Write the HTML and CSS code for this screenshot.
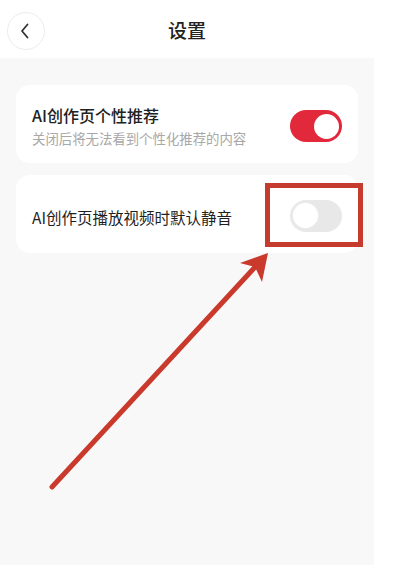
FILE: index.html
```html
<!DOCTYPE html>
<html lang="zh-CN">
<head>
<meta charset="utf-8">
<link rel="stylesheet" href="styles.css">
</head>
<body>
<div class="page">
  <div class="screen">
    <header class="header">
      <div class="back">
        <svg width="10" height="16" viewBox="0 0 10 16"><path d="M7.5 1.5 L2 8 L7.5 14.5" fill="none" stroke="#333" stroke-width="1.8" stroke-linecap="round" stroke-linejoin="round"/></svg>
      </div>
      <div class="title">设置</div>
    </header>
    <main class="main">
      <div class="card card-two-line">
        <div class="texts">
          <div class="label">AI创作页个性推荐</div>
          <div class="desc">关闭后将无法看到个性化推荐的内容</div>
        </div>
        <div class="switch on"><span class="knob"></span></div>
      </div>
      <div class="card card-one-line">
        <div class="texts">
          <div class="label">AI创作页播放视频时默认静音</div>
        </div>
        <div class="switch off"><span class="knob"></span></div>
      </div>
    </main>
  </div>
  <div class="highlight"></div>
  <svg class="arrow" width="394" height="565" viewBox="0 0 394 565">
    <line x1="52" y1="487" x2="256" y2="266" stroke="#c93a2c" stroke-width="5" stroke-linecap="round"/>
    <polygon points="268,253 240,263 255,267 262,282" fill="#c93a2c"/>
  </svg>
</div>
</body>
</html>
```
FILE: styles.css
```css
* { box-sizing: border-box; }
html, body { margin: 0; padding: 0; background: #ffffff; }
body { font-family: "Noto Sans CJK SC", "Noto Sans", sans-serif; }
.page { position: relative; width: 394px; height: 565px; overflow: hidden; background: #fff; }
.screen { width: 374px; height: 565px; display: flex; flex-direction: column; }
.header { height: 58px; position: relative; display: flex; align-items: center; justify-content: center; background: #fff; flex-shrink: 0; }
.back { position: absolute; left: 7px; top: 12px; width: 38px; height: 38px; border-radius: 50%; border: 1px solid #ececec; display: flex; align-items: center; justify-content: center; padding-right: 2px; }
.title { font-size: 19px; font-weight: 500; color: #222; line-height: 26px; margin-top: 2px; }
.main { flex: 1; background: #f8f8f8; padding: 27px 16px 0 16px; display: flex; flex-direction: column; gap: 12px; }
.card { background: #fff; border-radius: 14px; height: 78px; display: flex; align-items: center; justify-content: space-between; padding: 0 16px; }
.card-two-line { align-items: flex-start; padding-top: 19px; }
.card-two-line .switch { margin-top: 6px; }
.texts { display: flex; flex-direction: column; gap: 3px; }
.label { font-size: 16px; line-height: 22px; color: #222; font-weight: 500; }
.card-one-line .label { margin-top: 5px; font-size: 15.5px; font-weight: 400; color: #1f1f1f; }
.desc { font-size: 13.4px; line-height: 18px; color: #a8a8a8; }
.switch { width: 52px; height: 32px; border-radius: 16px; display: flex; align-items: center; padding: 0 3px; flex-shrink: 0; }
.switch.on { background: #e2283b; justify-content: flex-end; }
.switch.off { background: #e8e8e8; justify-content: flex-start; margin-top: 3px; }
.knob { width: 25px; height: 25px; border-radius: 50%; background: #fff; }
.switch.off .knob { box-shadow: 0 0 0 1px #ececec; }
.highlight { position: absolute; left: 265px; top: 183px; width: 98px; height: 64px; border: 5px solid #c53b2e; }
.arrow { position: absolute; left: 0; top: 0; }
```
